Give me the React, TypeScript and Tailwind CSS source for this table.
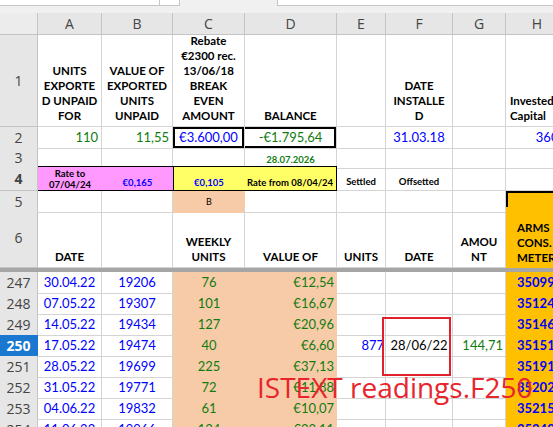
import React from 'react';

const COLS = 'grid grid-cols-[38px_64px_71px_72px_92px_49px_67px_53px_63px]';

const GRID = 'border-r border-b border-[#d4d4d4]';
const GREEN = 'text-[#107c10]';
const BLUE = 'text-[#0000ff]';

interface Reading {
  n: number;
  date: string;
  meter: string;
  units: string;
  value: string;
  arms: string;
}

const readings: Reading[] = [
  { n: 247, date: '30.04.22', meter: '19206', units: '76', value: '€12,54', arms: '35099' },
  { n: 248, date: '07.05.22', meter: '19307', units: '101', value: '€16,67', arms: '35124' },
  { n: 249, date: '14.05.22', meter: '19434', units: '127', value: '€20,96', arms: '35146' },
  { n: 250, date: '17.05.22', meter: '19474', units: '40', value: '€6,60', arms: '35151' },
  { n: 251, date: '28.05.22', meter: '19699', units: '225', value: '€37,13', arms: '35191' },
  { n: 252, date: '31.05.22', meter: '19771', units: '72', value: '€11,88', arms: '35202' },
  { n: 253, date: '04.06.22', meter: '19832', units: '61', value: '€10,07', arms: '35215' },
  { n: 254, date: '11.06.22', meter: '19966', units: '134', value: '€22,11', arms: '35249' },
];

const RowHead = ({ n, active }: { n: number; active?: boolean }) => (
  <div
    className={
      active
        ? "flex items-center justify-center bg-[#1a78d0] text-white font-bold border-b border-r border-[#1a78d0] font-['Open_Sans',sans-serif] text-[14px]"
        : "flex items-center justify-center bg-[#e6e6e6] text-[#444] border-b border-r border-[#c4c4c4] font-['Open_Sans',sans-serif] text-[14px]"
    }
  >
    {n}
  </div>
);

const Head = ({ lines, className = '' }: { lines: string[]; className?: string }) => (
  <div className={`flex flex-col justify-end items-center pb-[3px] font-bold text-[11.5px] leading-[15px] text-black whitespace-nowrap overflow-hidden ${className}`}>
    {lines.map((l, i) => (
      <span key={i}>{l}</span>
    ))}
  </div>
);

const App = () => {
  return (
    <div className="w-[553px] h-[427px] overflow-hidden bg-white relative font-['Lato',sans-serif]">
      {/* formula bar remnant */}
      <div className="h-[13px] bg-[#f0f0f0] flex items-start">
        <div className="w-[180px] h-[6px] bg-white border-r border-b border-[#c6c6c6] flex justify-end">
          <div className="w-[20px] h-full border-l border-[#c6c6c6]" />
        </div>
        <div className="w-[97px]" />
        <div className="flex-1 h-[6px] bg-white border-l border-b border-[#c6c6c6]" />
      </div>

      {/* column letters */}
      <div className={`${COLS} h-[22px] font-['Open_Sans',sans-serif] text-[14px] text-[#444]`}>
        <div className="bg-[#ececec] border-r border-b border-[#c4c4c4]" />
        {['A', 'B', 'C', 'D', 'E', 'F', 'G', 'H'].map((c) => (
          <div key={c} className="flex items-center justify-center bg-[#e6e6e6] border-r border-b border-[#c4c4c4]">
            {c}
          </div>
        ))}
      </div>

      {/* row 1 */}
      <div className={`${COLS} h-[92px]`}>
        <RowHead n={1} />
        <Head className={GRID} lines={['UNITS', 'EXPORTE', 'D UNPAID', 'FOR']} />
        <Head className={GRID} lines={['VALUE OF', 'EXPORTED', 'UNITS', 'UNPAID']} />
        <Head className={GRID} lines={['Rebate', '€2300 rec.', '13/06/18', 'BREAK', 'EVEN', 'AMOUNT']} />
        <Head className={GRID} lines={['BALANCE']} />
        <div className={GRID} />
        <Head className={GRID} lines={['DATE', 'INSTALLE', 'D']} />
        <div className={GRID} />
        <Head className={`${GRID} items-start pl-[4px]`} lines={['Invested', ' Capital']} />
      </div>

      {/* row 2 */}
      <div className={`${COLS} h-[20px] text-[13px]`}>
        <RowHead n={2} />
        <div className={`${GRID} ${GREEN} flex items-center justify-end pr-[3px]`}>110</div>
        <div className={`${GRID} ${GREEN} flex items-center justify-end pr-[3px]`}>11,55</div>
        <div className={`${GRID} ${BLUE} flex items-center justify-center shadow-[inset_0_0_0_2px_#000]`}>€3.600,00</div>
        <div className={`${GRID} ${GREEN} flex items-center justify-center shadow-[inset_0_2px_0_#000,inset_-2px_0_0_#000,inset_0_-2px_0_#000]`}>-€1.795,64</div>
        <div className={GRID} />
        <div className={`${GRID} ${BLUE} flex items-center justify-center`}>31.03.18</div>
        <div className={GRID} />
        <div className={`${GRID} ${BLUE} flex items-center justify-end pr-[2px]`}>3600</div>
      </div>

      {/* row 3 */}
      <div className={`${COLS} h-[19px]`}>
        <RowHead n={3} />
        <div className={GRID} />
        <div className={GRID} />
        <div className={GRID} />
        <div className={`${GRID} ${GREEN} flex items-end justify-center pb-[1px] font-bold text-[9.5px]`}>28.07.2026</div>
        <div className={GRID} />
        <div className={GRID} />
        <div className={GRID} />
        <div className={GRID} />
      </div>

      {/* row 4 */}
      <div className={`${COLS} h-[25px] font-bold text-[9.5px] leading-[11px]`}>
        <RowHead n={4} />
        <div className="bg-[#ff99ff] shadow-[inset_0_1px_0_#000,inset_0_-1px_0_#000] flex flex-col items-center justify-center text-black">
          <span>Rate to</span>
          <span>07/04/24</span>
        </div>
        <div className={`bg-[#ff99ff] shadow-[inset_0_1px_0_#000,inset_0_-1px_0_#000] flex items-end justify-center pb-[3px] ${BLUE}`}>€0,165</div>
        <div className={`bg-[#ffff66] shadow-[inset_1px_1px_0_#000,inset_0_-1px_0_#000] flex items-end justify-center pb-[3px] ${BLUE}`}>€0,105</div>
        <div className="bg-[#ffff66] shadow-[inset_0_1px_0_#000,inset_-1px_-1px_0_#000] flex items-end pl-[2px] pb-[3px] text-black whitespace-nowrap">Rate from 08/04/24</div>
        <div className={`${GRID} flex items-end justify-center pb-[3px] text-black`}>Settled</div>
        <div className={`${GRID} flex items-end justify-center pb-[3px] text-black`}>Offsetted</div>
        <div className={GRID} />
        <div className={GRID} />
      </div>

      {/* row 5 */}
      <div className={`${COLS} h-[16px]`}>
        <RowHead n={5} />
        <div className={GRID} />
        <div className={GRID} />
        <div className="bg-[#f8cba8] border-b border-[#f8cba8] flex items-center justify-center text-[9px] text-black">B</div>
        <div className={GRID} />
        <div className={GRID} />
        <div className={GRID} />
        <div className={GRID} />
        <div className="bg-[#ffc000] shadow-[inset_0_0_0_2px_#000]" />
      </div>

      {/* row 6 */}
      <div className={`${COLS} h-[61px]`}>
        <RowHead n={6} />
        <Head className={GRID} lines={['DATE']} />
        <div className={GRID} />
        <Head className={GRID} lines={['WEEKLY', 'UNITS']} />
        <Head className={GRID} lines={['VALUE OF']} />
        <Head className={GRID} lines={['UNITS']} />
        <Head className={GRID} lines={['DATE']} />
        <Head className={GRID} lines={['AMOU', 'NT']} />
        <Head className="bg-[#ffc000] items-start pl-[11px]" lines={['ARMS', 'CONS.', 'METER']} />
      </div>

      {/* frozen pane divider */}
      <div className="h-[4px] bg-[#a6a6a6]" />

      {readings.map((r) => {
        const active = r.n === 250;
        return (
          <div key={r.n} className={`${COLS} h-[21px] text-[13px]`}>
            <RowHead n={r.n} active={active} />
            <div className={`${GRID} ${BLUE} flex items-center justify-center`}>{r.date}</div>
            <div className={`${GRID} ${BLUE} flex items-center justify-center`}>{r.meter}</div>
            <div className={`bg-[#f8cba8] ${GREEN} flex items-center justify-center`}>{r.units}</div>
            <div className={`bg-[#f8cba8] ${GREEN} flex items-center justify-end pr-[3px]`}>{r.value}</div>
            <div className={`${GRID} ${BLUE} flex items-center justify-end pr-[1px]`}>{active ? '877' : ''}</div>
            <div className={`${GRID} text-black flex items-center justify-center`}>{active ? '28/06/22' : ''}</div>
            <div className={`${GRID} ${GREEN} flex items-center justify-end pr-[2px]`}>{active ? '144,71' : ''}</div>
            <div className={`bg-[#ffc000] ${BLUE} font-bold flex items-center pl-[11px]`}>{r.arms}</div>
          </div>
        );
      })}

      {/* annotation overlay */}
      <div className="absolute left-[382px] top-[317px] w-[69px] h-[59px] border-2 border-[#e0202a]" />
      <div className="absolute left-[257px] top-[373px] text-[28px] leading-[28px] font-medium text-[#e8242c] font-['Open_Sans',sans-serif] whitespace-nowrap">
        ISTEXT readings.F250
      </div>
    </div>
  );
};

export default App;
